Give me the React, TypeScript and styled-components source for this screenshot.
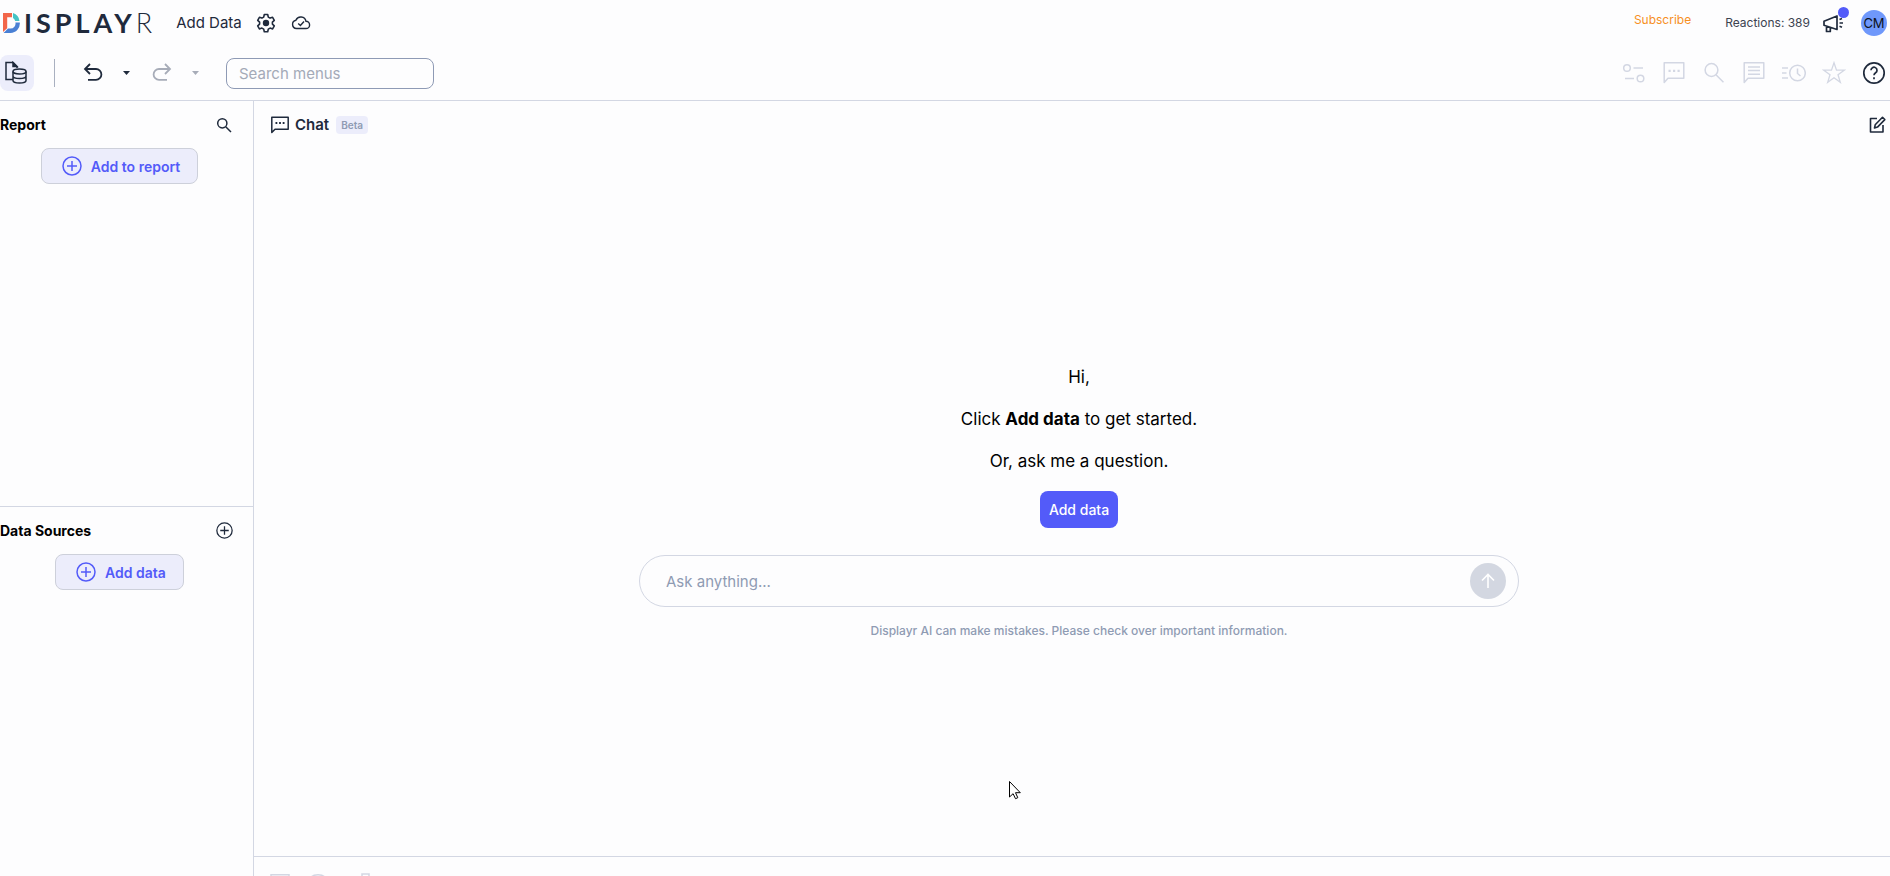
import React from 'react';
import styled, { createGlobalStyle } from 'styled-components';

const ink = '#1f2a3c';
const line = '#d3d7e3';
const accent = '#535bf9';
const tint = '#ecedfb';
const slate = '#8f9bb3';

const GlobalStyle = createGlobalStyle`
  *, *::before, *::after { box-sizing: border-box; }
  body {
    margin: 0;
    background: #fdfdfe;
    color: #000;
    font-family: Inter, "Liberation Sans", sans-serif;
    font-size: 15px;
  }
  button, input { font: inherit; color: inherit; }
  h1, h2, p { margin: 0; }
`;

const Page = styled.div`
  display: flex;
  flex-direction: column;
  height: 100vh;
  overflow: hidden;
`;

const Header = styled.header`
  flex: none;
  border-bottom: 1px solid ${line};
`;

const TitleBar = styled.div`
  display: flex;
  align-items: center;
  height: 46px;
  padding: 0 3px;
`;

const Logo = styled.a`
  display: flex;
  align-items: center;
  gap: 4px;
  color: ${ink};
  font-family: Lato, sans-serif;
  font-size: 27px;
  line-height: 28px;
  text-decoration: none;
`;

const Wordmark = styled.span`
  font-weight: 700;
  letter-spacing: 4px;
`;

const WordmarkTail = styled.span`
  font-weight: 300;
`;

const DocumentName = styled.h1`
  margin-left: 24px;
  font-size: 15px;
  font-weight: 400;
  line-height: 20px;
  color: ${ink};
`;

const Spacer = styled.div`
  flex: 1;
`;

const IconButton = styled.button<{ $size?: number; $muted?: boolean }>`
  display: grid;
  place-items: center;
  flex: none;
  width: ${({ $size = 24 }) => $size}px;
  height: ${({ $size = 24 }) => $size}px;
  padding: 0;
  border: 0;
  background: none;
  color: ${({ $muted }) => ($muted ? '#d3d7e3' : ink)};
  svg { display: block; }
`;

const DocumentActions = styled.div`
  display: flex;
  gap: 11px;
  margin-left: 12px;
`;

const Account = styled.div`
  display: flex;
  align-items: center;
  font-size: 12px;
`;

const Subscribe = styled.a`
  margin-right: 34px;
  padding-bottom: 6px;
  color: #f7901e;
  line-height: 16px;
  text-decoration: none;
`;

const Reactions = styled.span`
  color: #3c4350;
  line-height: 16px;
`;

const News = styled.button`
  position: relative;
  width: 24px;
  height: 24px;
  margin: 0 16px 0 11px;
  padding: 0;
  border: 0;
  background: none;
  color: ${ink};
  &::after {
    content: '';
    position: absolute;
    top: -4px;
    right: -4px;
    width: 11px;
    height: 11px;
    border-radius: 50%;
    background: ${accent};
  }
  svg { display: block; }
`;

const Avatar = styled.button`
  width: 26px;
  height: 26px;
  padding: 0;
  border: 0;
  border-radius: 50%;
  background: #6f98fb;
  color: #0c1220;
  font-size: 13px;
`;

const Toolbar = styled.div`
  display: flex;
  align-items: center;
  height: 54px;
  padding-right: 4px;
`;

const PanelToggle = styled.button`
  display: grid;
  place-items: center;
  width: 34px;
  height: 36px;
  padding: 0 2px 0 0;
  border: 0;
  border-radius: 8px;
  background: ${tint};
  color: ${ink};
`;

const Divider = styled.span`
  width: 1px;
  height: 28px;
  margin: 0 26px 0 20px;
  background: #a9b0c0;
`;

const History = styled.div<{ $disabled?: boolean }>`
  display: flex;
  align-items: center;
  gap: 12px;
  margin-right: 15px;
  button { color: ${({ $disabled }) => ($disabled ? '#a7acb8' : ink)}; }
`;

const MenuSearch = styled.input`
  width: 208px;
  height: 31px;
  margin-left: 7px;
  padding: 0 12px;
  border: 1px solid #8e9ab5;
  border-radius: 8px;
  background: transparent;
  outline: none;
  &::placeholder { color: #a4aab8; opacity: 1; }
`;

const ToolGroup = styled.div`
  display: flex;
  gap: 16px;
`;

const Body = styled.div`
  display: flex;
  flex: 1;
  min-height: 0;
`;

const Sidebar = styled.aside`
  display: flex;
  flex-direction: column;
  flex: none;
  width: 254px;
  border-right: 1px solid ${line};
`;

const Panel = styled.section<{ $grow: number }>`
  display: flex;
  flex-direction: column;
  align-items: center;
  flex: ${({ $grow }) => $grow} 1 0;
  padding-right: 14px;
  & + & { border-top: 1px solid ${line}; }
`;

const PanelHeader = styled.div`
  display: flex;
  align-items: center;
  justify-content: space-between;
  align-self: stretch;
  height: 47px;
  padding-right: 5px;
`;

const PanelTitle = styled.h2`
  font-size: 14px;
  font-weight: 700;
  line-height: 20px;
`;

const AddButton = styled.button`
  display: flex;
  align-items: center;
  gap: 9px;
  height: 36px;
  padding: 0 17px 0 20px;
  border: 1px solid #cdd0da;
  border-radius: 8px;
  background: ${tint};
  color: ${accent};
  font-size: 14px;
  font-weight: 600;
`;

const Main = styled.main`
  display: flex;
  flex-direction: column;
  flex: 1;
  min-width: 0;
`;

const ChatHeader = styled.div`
  display: flex;
  align-items: center;
  height: 48px;
  padding: 0 1px 0 17px;
`;

const ChatTitle = styled.h2`
  margin: 0 7px 0 6px;
  color: ${ink};
  font-size: 15px;
  font-weight: 600;
  line-height: 20px;
`;

const Badge = styled.span`
  padding: 0 5px;
  border-radius: 4px;
  background: ${tint};
  color: ${slate};
  font-size: 10px;
  font-weight: 600;
  line-height: 18px;
`;

const Conversation = styled.div`
  display: flex;
  flex-direction: column;
  align-items: center;
  justify-content: center;
  flex: 1;
  padding: 0 4px 1px 18px;
`;

const Greeting = styled.p`
  margin-bottom: 18px;
  font-size: 17px;
  line-height: 24px;
`;

const PrimaryButton = styled.button`
  height: 37px;
  padding: 0 9px;
  border: 0;
  border-radius: 8px;
  background: ${accent};
  color: #fff;
  font-size: 14px;
  font-weight: 500;
`;

const Composer = styled.form`
  display: flex;
  align-items: center;
  width: 100%;
  max-width: 880px;
  height: 52px;
  margin: 27px 0 16px;
  padding: 0 12px 0 26px;
  border: 1px solid ${line};
  border-radius: 26px;
`;

const Prompt = styled.input`
  flex: 1;
  min-width: 0;
  padding: 0;
  border: 0;
  background: none;
  outline: none;
  &::placeholder { color: ${slate}; opacity: 1; }
`;

const Send = styled.button`
  display: grid;
  place-items: center;
  width: 36px;
  height: 36px;
  padding: 0;
  border: 0;
  border-radius: 50%;
  background: #d3d7e1;
  color: #fff;
`;

const Disclaimer = styled.p`
  color: ${slate};
  font-size: 12px;
  font-weight: 500;
  line-height: 16px;
`;

const StatusBar = styled.footer`
  display: flex;
  flex: none;
  height: 20px;
  padding: 16px 16px 0;
  border-top: 1px solid ${line};
  overflow: hidden;
  color: ${line};
`;

const Pointer = styled.svg`
  position: fixed;
  top: 780px;
  left: 1008px;
  pointer-events: none;
`;

type IconProps = { size?: number; weight?: number; children: React.ReactNode };

function Icon({ size = 24, weight = 1.5, children }: IconProps) {
  return (
    <svg width={size} height={size} viewBox={`0 0 ${size} ${size}`} fill="none" stroke="currentColor" strokeWidth={weight} aria-hidden="true">
      {children}
    </svg>
  );
}

const LogoMark = () => (
  <svg width="17" height="20" viewBox="0 0 17 20" aria-hidden="true">
    <path d="M0 0h9v4.200H4.200v11L0 19z" fill="#f2664a" />
    <path d="M10 0a9.500 9.500 0 0 1 6.500 8h-4.300A5.500 5.500 0 0 0 10 5z" fill="#45c4c4" />
    <path d="M16.800 9.500A9.500 9.500 0 0 1 7.500 20H.5l4.500-4.400h2.500a5 5 0 0 0 4.900-6.100z" fill="#4a80d4" />
  </svg>
);

const GearIcon = () => (
  <Icon weight={1.6}>
    <path d="M10.300 3.500h3.400l.6 2.600 1.800 1 2.500-.8 1.700 3-1.900 1.800v2l1.900 1.800-1.700 3-2.500-.8-1.800 1-.6 2.600h-3.400l-.6-2.600-1.800-1-2.500.8-1.700-3 1.900-1.800v-2L3.700 9.300l1.700-3 2.500.8 1.800-1z" strokeLinejoin="round" />
    <circle cx="12" cy="12" r="2.400" fill="currentColor" />
  </Icon>
);

const CloudIcon = () => (
  <Icon weight={1.4}>
    <path d="M7.500 17.500a4.200 4.200 0 0 1-.6-8.300A5.300 5.300 0 0 1 17 10.300 3.600 3.600 0 0 1 17 17.500z" />
    <path d="M9.200 12.500l2.200 2 3.600-4" />
  </Icon>
);

const SourcesIcon = () => (
  <Icon weight={1.5}>
    <path d="M9 18.500H2V1.500h7l4 4V7" />
    <path d="M9 1.500v4h4z" fill="currentColor" />
    <path d="M9 10.500v9c0 1.400 2.900 2.500 6.500 2.500s6.500-1.100 6.500-2.500v-9M9 15c0 1.400 2.900 2.500 6.500 2.500S22 16.400 22 15" />
    <ellipse cx="15.500" cy="10.500" rx="6.500" ry="2.500" />
  </Icon>
);

const UndoIcon = () => (
  <Icon weight={1.8}>
    <path d="M9 3L4 8l5 5M4.500 8H15a5.300 5.300 0 0 1 0 10.800H7" />
  </Icon>
);

const RedoIcon = () => (
  <Icon weight={1.8}>
    <path d="M15 3l5 5-5 5M19.500 8H9a5.300 5.300 0 0 0 0 10.800h8" />
  </Icon>
);

const CaretIcon = () => (
  <svg width="7" height="4" viewBox="0 0 7 4" aria-hidden="true"><path d="M0 0h7L3.500 4z" fill="currentColor" /></svg>
);

const MegaphoneIcon = () => (
  <Icon weight={1.7}>
    <path d="M3 10.200l13-5.200v13.500L3 14.300zM5.500 15v5.500h3.800V16" strokeLinejoin="round" />
    <path d="M18.500 8.500l2.500-1M18.500 12h3.500M18.500 15.200l2.500 1" />
  </Icon>
);

const SlidersIcon = () => (
  <Icon><circle cx="5" cy="7" r="3.300" /><path d="M11.500 7H21M3 17.500h9" /><circle cx="18.500" cy="17.500" r="3.300" /></Icon>
);

const BubblePath = () => <path d="M2.200 21.500V1.700h19.600v15.600H6z" strokeLinejoin="round" />;

const ChatDotsIcon = () => (
  <Icon><BubblePath /><path d="M6.500 9.800h2.200M11 9.800h2.200M15.500 9.800h2.200" strokeWidth="2.200" /></Icon>
);

const CommentIcon = () => (
  <Icon><BubblePath /><path d="M6 6h12M6 9.600h12M6 13.200h12" /></Icon>
);

const SearchIcon = () => (
  <Icon><circle cx="9.500" cy="9" r="6.400" /><path d="M14 13.700l7.500 7.500" /></Icon>
);

const HistoryIcon = () => (
  <Icon><circle cx="15.500" cy="12" r="7.800" /><path d="M15.500 7.500v5l3 2.500M0 7h6M0 12h4.500M0 17h6" /></Icon>
);

const StarIcon = () => (
  <Icon weight={1.3}><path d="M12 1.800l2.500 7.400h7.700l-6.200 4.600 2.300 7.500L12 16.800l-6.300 4.500L8 13.800 1.800 9.200h7.700z" /></Icon>
);

const HelpIcon = () => (
  <Icon weight={1.7}>
    <circle cx="12" cy="12" r="10.200" />
    <path d="M9 9.300a3 3 0 1 1 4.600 2.500c-1 .7-1.600 1.200-1.600 2.500M12 16.200v2" />
  </Icon>
);

const EditIcon = () => (
  <Icon size={18} weight={1.6}>
    <path d="M9 2.500H2.500v13.500H15V9" strokeLinejoin="round" />
    <path d="M6.500 12l.7-3.200 7.300-7.500 2.300 2.300-7.300 7.500z" strokeLinejoin="round" />
  </Icon>
);

const PlusCircleIcon = ({ size = 20 }: { size?: number }) => (
  <svg width={size} height={size} viewBox="0 0 20 20" fill="none" stroke="currentColor" strokeWidth="1.500" aria-hidden="true">
    <circle cx="10" cy="10" r="9" /><path d="M10 5v10M5 10h10" />
  </svg>
);

const PanelSearchIcon = () => (
  <Icon size={16} weight={1.5}><circle cx="6.300" cy="6.300" r="4.600" /><path d="M9.700 9.700l5.300 5.300" /></Icon>
);

const ChatTitleIcon = () => (
  <svg width="18" height="18" viewBox="0 0 18 18" fill="none" stroke={ink} strokeWidth="1.500" aria-hidden="true">
    <path d="M.8 16.500V1.200h16.400v12H4z" strokeLinejoin="round" />
    <path d="M4.500 7h1.800M8.100 7h1.800M11.700 7h1.800" strokeWidth="1.800" />
  </svg>
);

const tools = [
  { label: 'Properties', icon: <SlidersIcon /> },
  { label: 'Chat', icon: <ChatDotsIcon /> },
  { label: 'Find', icon: <SearchIcon /> },
  { label: 'Comments', icon: <CommentIcon /> },
  { label: 'Version history', icon: <HistoryIcon /> },
  { label: 'Favorites', icon: <StarIcon /> },
];

export default function App() {
  return (
    <Page>
      <GlobalStyle />
      <Header>
        <TitleBar>
          <Logo href="#" aria-label="Displayr">
            <LogoMark />
            <span><Wordmark>ISPLAY</Wordmark><WordmarkTail>R</WordmarkTail></span>
          </Logo>
          <DocumentName>Add Data</DocumentName>
          <DocumentActions>
            <IconButton aria-label="Document settings"><GearIcon /></IconButton>
            <IconButton aria-label="Saved"><CloudIcon /></IconButton>
          </DocumentActions>
          <Spacer />
          <Account>
            <Subscribe href="#">Subscribe</Subscribe>
            <Reactions>Reactions: 389</Reactions>
            <News aria-label="What's new"><MegaphoneIcon /></News>
            <Avatar>CM</Avatar>
          </Account>
        </TitleBar>
        <Toolbar>
          <PanelToggle aria-label="Report and data sources"><SourcesIcon /></PanelToggle>
          <Divider />
          <History>
            <IconButton aria-label="Undo"><UndoIcon /></IconButton>
            <IconButton $size={18} aria-label="Undo list"><CaretIcon /></IconButton>
          </History>
          <History $disabled>
            <IconButton aria-label="Redo"><RedoIcon /></IconButton>
            <IconButton $size={18} aria-label="Redo list"><CaretIcon /></IconButton>
          </History>
          <MenuSearch aria-label="Search menus" placeholder="Search menus" />
          <Spacer />
          <ToolGroup>
            {tools.map(({ label, icon }) => (
              <IconButton key={label} $muted aria-label={label}>{icon}</IconButton>
            ))}
            <IconButton aria-label="Help"><HelpIcon /></IconButton>
          </ToolGroup>
        </Toolbar>
      </Header>
      <Body>
        <Sidebar>
          <Panel $grow={11}>
            <PanelHeader>
              <PanelTitle>Report</PanelTitle>
              <IconButton $size={20} aria-label="Search report"><PanelSearchIcon /></IconButton>
            </PanelHeader>
            <AddButton><PlusCircleIcon />Add to report</AddButton>
          </Panel>
          <Panel $grow={10}>
            <PanelHeader>
              <PanelTitle>Data Sources</PanelTitle>
              <IconButton $size={20} aria-label="Add data source"><PlusCircleIcon size={17} /></IconButton>
            </PanelHeader>
            <AddButton><PlusCircleIcon />Add data</AddButton>
          </Panel>
        </Sidebar>
        <Main>
          <ChatHeader>
            <ChatTitleIcon />
            <ChatTitle>Chat</ChatTitle>
            <Badge>Beta</Badge>
            <Spacer />
            <IconButton aria-label="New chat"><EditIcon /></IconButton>
          </ChatHeader>
          <Conversation>
            <Greeting>Hi,</Greeting>
            <Greeting>Click <strong>Add data</strong> to get started.</Greeting>
            <Greeting>Or, ask me a question.</Greeting>
            <PrimaryButton>Add data</PrimaryButton>
            <Composer onSubmit={(event) => event.preventDefault()}>
              <Prompt aria-label="Ask anything" placeholder="Ask anything..." />
              <Send aria-label="Send">
                <Icon size={18} weight={1.6}><path d="M9 16V3M3 8.500L9 2.500l6 6" /></Icon>
              </Send>
            </Composer>
            <Disclaimer>Displayr AI can make mistakes. Please check over important information.</Disclaimer>
          </Conversation>
          <StatusBar>
            <svg width="110" height="20" viewBox="0 0 110 20" fill="none" stroke="currentColor" strokeWidth="1.500" aria-hidden="true">
              <path d="M1 17V1.800h18V17M40 8c0-4 3-6.200 8-6.200S56 4 56 8M92 12V1h7v4" />
            </svg>
          </StatusBar>
        </Main>
      </Body>
      <Pointer width="14" height="20" viewBox="0 0 14 20" aria-hidden="true">
        <path d="M1.500 1.500v15.500l3.600-3.300 2.400 5 2.300-1-2.300-5h4.800z" fill="#fff" stroke="#000" strokeWidth="1" />
      </Pointer>
    </Page>
  );
}
